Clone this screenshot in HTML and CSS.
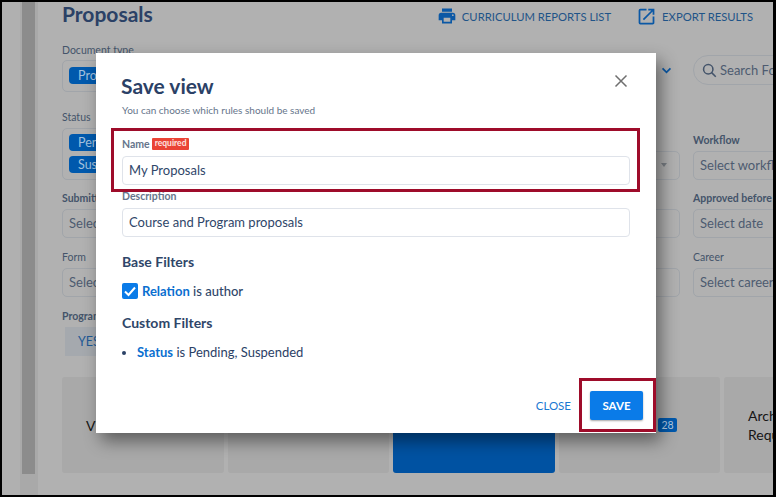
FILE: index.html
```html
<!DOCTYPE html>
<html lang="en">
<head>
    <meta charset="UTF-8">
    <meta name="viewport" content="width=device-width, initial-scale=1.0">
    <title>Proposals</title>
    <link rel="stylesheet" href="styles.css">
</head>
<body>
    <div class="frame">
        <div class="rail"><div class="rail-track"><div class="rail-strip"></div></div></div>
        <div class="page">
            <div class="page-head">
                <h1>Proposals</h1>
                <div class="head-links">
                    <a class="head-link">
                        <svg viewBox="0 0 24 24" width="20" height="20"><path d="M18,3H6V7H18M19,12A1,1 0 0,1 18,11A1,1 0 0,1 19,10A1,1 0 0,1 20,11A1,1 0 0,1 19,12M16,19H8V14H16M19,8H5A3,3 0 0,0 2,11V17H6V21H18V17H22V11A3,3 0 0,0 19,8Z"/></svg>
                        CURRICULUM REPORTS LIST
                    </a>
                    <a class="head-link">
                        <svg viewBox="0 0 24 24" width="21" height="21"><path d="M19 19H5V5h7V3H5a2 2 0 0 0-2 2v14a2 2 0 0 0 2 2h14c1.1 0 2-.9 2-2v-7h-2v7zM14 3v2h3.59l-9.83 9.83 1.41 1.41L19 6.41V10h2V3h-7z"/></svg>
                        EXPORT RESULTS
                    </a>
                </div>
            </div>

            <div class="filters">
                <div class="filter col-1">
                    <label class="tight">Document type</label>
                    <div class="field tall"><span class="tag">Proposal</span></div>
                </div>
                <div class="chevron-cell">
                    <svg viewBox="0 0 12 8" width="11" height="7"><path d="M1.500 1.500 6 6l4.500-4.500" fill="none" stroke="#0b58a5" stroke-width="2"/></svg>
                </div>
                <div class="search">
                    <svg viewBox="0 0 24 24" width="15" height="15"><circle cx="10" cy="10" r="7.500" fill="none" stroke="#44546a" stroke-width="2.500"/><path d="m15 15 7 7" stroke="#44546a" stroke-width="2.500"/></svg>
                    Search Forms
                </div>

                <div class="filter col-1">
                    <label>Status</label>
                    <div class="field tags">
                        <span class="tag">Pending</span>
                        <span class="tag">Suspended</span>
                    </div>
                </div>
                <div class="filter col-4 push-status">
                    <div class="field"><span class="caret"></span></div>
                </div>
                <div class="filter col-5 push-label">
                    <label class="strong">Workflow</label>
                    <div class="field">Select workflow</div>
                </div>

                <div class="filter col-1">
                    <label class="strong">Submitted after</label>
                    <div class="field">Select date</div>
                </div>
                <div class="filter col-4 push-field">
                    <div class="field"></div>
                </div>
                <div class="filter col-5">
                    <label class="strong">Approved before</label>
                    <div class="field">Select date</div>
                </div>

                <div class="filter col-1">
                    <label>Form</label>
                    <div class="field">Select form</div>
                </div>
                <div class="filter col-4 push-field">
                    <div class="field"></div>
                </div>
                <div class="filter col-5">
                    <label>Career</label>
                    <div class="field">Select career</div>
                </div>

                <div class="filter col-1">
                    <label class="strong">Program</label>
                    <div class="yes-no"><span>YES</span></div>
                </div>
            </div>

            <div class="tiles">
                <div class="tile">View All</div>
                <div class="tile"></div>
                <div class="tile active"></div>
                <div class="tile"><span class="count">28</span></div>
                <div class="tile">Archived<br>Requests</div>
            </div>
        </div>
    </div>

    <div class="modal">
        <button class="modal-close" aria-label="Close">
            <svg viewBox="0 0 14 14" width="14" height="14"><path d="M1.500 1.500l11 11M12.500 1.500l-11 11" stroke="#6f6f6f" stroke-width="1.500" fill="none"/></svg>
        </button>
        <h2>Save view</h2>
        <p class="modal-sub">You can choose which rules should be saved</p>

        <div class="modal-label name-label">Name <span class="required">required</span></div>
        <div class="modal-input">My Proposals</div>
        <div class="modal-label">Description</div>
        <div class="modal-input">Course and Program proposals</div>

        <h3>Base Filters</h3>
        <div class="check-row">
            <span class="checkbox">
                <svg viewBox="0 0 16 16" width="16" height="16"><path d="M3 8.500 6.500 12 13 4.500" fill="none" stroke="#fff" stroke-width="2"/></svg>
            </span>
            <span><b>Relation</b> is author</span>
        </div>
        <h3 class="custom">Custom Filters</h3>
        <ul>
            <li><b>Status</b> is Pending, Suspended</li>
        </ul>

        <div class="modal-foot">
            <a class="close-link">CLOSE</a>
            <button class="save-btn">SAVE</button>
        </div>
    </div>

    <!-- red callouts from the screenshot -->
    <div class="callout callout-name"></div>
    <div class="callout callout-save"></div>
</body>
</html>
```

FILE: styles.css
```css
html, body {
    margin: 0;
    padding: 0;
    height: 100%;
}
body {
    font-family: "Lato", "Liberation Sans", sans-serif;
    background-color: #000;
    overflow: hidden;
    position: relative;
}
.frame {
    display: flex;
    height: 493px;
    width: 771px;
    margin: 2px 0 0 2px;
    background-color: #b0b0b0;
    overflow: hidden;
}
.rail {
    width: 36px;
    flex: none;
    padding-left: 18px;
    box-sizing: border-box;
    background-color: #b0b0b0;
}
.rail-track {
    height: 100%;
    padding-left: 2px;
    background-color: #a9a9a9;
}
.rail-strip {
    width: 13px;
    height: 472px;
    background-color: #8c8c8c;
}
.page {
    flex: 1;
    min-width: 0;
    padding-left: 24px;
    background-color: #b1b1b1;
}
.page-head {
    display: flex;
    justify-content: space-between;
    height: 42px;
}
h1 {
    margin: 0;
    font-size: 21px;
    line-height: 24px;
    font-weight: 700;
    color: #2b4166;
}
.head-links {
    display: flex;
    gap: 25px;
    padding: 3px 20px 0 0;
    height: 22px;
}
.head-link {
    display: flex;
    align-items: center;
    gap: 5px;
    font-size: 11.250px;
    color: #1f5488;
    white-space: nowrap;
}
.head-link svg {
    fill: #0b58a5;
}

.filters {
    display: grid;
    grid-template-columns: repeat(5, 144.750px);
    grid-template-rows: 67px 81px 59px 59px 50px;
    column-gap: 13px;
}
.col-1 { grid-column: 1; }
.col-4 { grid-column: 4; }
.col-5 { grid-column: 5; }
.filter {
    display: flex;
    flex-direction: column;
    min-width: 0;
}
.push-status { padding-top: 40px; }
.push-label { padding-top: 23px; }
.push-field { padding-top: 17px; }
label {
    font-size: 10.500px;
    line-height: 12px;
    height: 12px;
    color: #44546a;
    margin-bottom: 5px;
    white-space: nowrap;
}
label.tight {
    margin-bottom: 4px;
}
label.strong {
    font-weight: 700;
}
.field {
    position: relative;
    height: 29px;
    box-sizing: border-box;
    border: 1px solid #a1a5aa;
    border-radius: 5px;
    padding: 0 6px;
    font-size: 13px;
    line-height: 27px;
    color: #4d5b70;
    white-space: nowrap;
    overflow: hidden;
}
.field.tall {
    height: 32px;
    padding: 6px 6px;
}
.field.tags {
    height: 52px;
    padding: 5px 6px;
    display: flex;
    flex-direction: column;
    align-items: flex-start;
    gap: 5px;
}
.tag {
    display: block;
    height: 17px;
    line-height: 17px;
    padding: 0 9px;
    border-radius: 4px;
    background-color: #0059ad;
    color: #a3c1de;
    font-size: 12.500px;
}
.caret {
    position: absolute;
    right: 12px;
    top: 11px;
    border-top: 4px solid #7a7f85;
    border-left: 3px solid transparent;
    border-right: 3px solid transparent;
}
.chevron-cell {
    grid-column: 4;
    display: flex;
    justify-content: flex-end;
    padding: 23px 8px 0 0;
}
.search {
    grid-column: 5;
    display: flex;
    align-items: center;
    gap: 3px;
    height: 30px;
    margin-top: 11px;
    margin-right: -10px;
    box-sizing: border-box;
    border: 1px solid #a1a5aa;
    border-radius: 15px;
    padding-left: 8px;
    font-size: 13px;
    color: #4d5b70;
    white-space: nowrap;
    overflow: hidden;
}
.yes-no {
    width: 60px;
    height: 29px;
    margin-left: 3px;
    padding-left: 13px;
    box-sizing: border-box;
    background-color: #a5a9ae;
    color: #1f5a96;
    font-size: 12.500px;
    line-height: 29px;
}

.tiles {
    display: flex;
    gap: 4px;
    margin-top: 17px;
}
.tile {
    flex: none;
    position: relative;
    display: flex;
    align-items: center;
    width: 161.500px;
    height: 96px;
    padding-left: 24px;
    box-sizing: border-box;
    border-radius: 3px;
    background-color: #a9a9a9;
    color: #161616;
    font-size: 14px;
    line-height: 19px;
}
.tile.active {
    background-color: #0052a2;
}
.count {
    position: absolute;
    right: 43px;
    top: 41px;
    width: 19px;
    height: 14px;
    border-radius: 2px;
    background-color: #0059ad;
    color: #b5cde6;
    font-size: 10.500px;
    line-height: 14px;
    text-align: center;
}

/* dialog sits over the dimmed page */
.modal {
    position: absolute;
    left: 96px;
    top: 53px;
    width: 560px;
    height: 380px;
    padding: 20px 26px 0 26px;
    box-sizing: border-box;
    background-color: #fff;
    box-shadow: 5px 8px 16px rgba(0, 0, 0, 0.45);
    color: #2b4166;
}
.modal-close {
    position: absolute;
    right: 28px;
    top: 21px;
    padding: 0;
    border: none;
    background: none;
    line-height: 0;
}
h2 {
    margin: 0 0 0 -1px;
    font-size: 21px;
    line-height: 26px;
    font-weight: 700;
    color: #2b4166;
}
.modal-sub {
    margin: 5px 0 0;
    font-size: 10px;
    line-height: 13px;
    color: #66758b;
}
.modal-label {
    font-size: 10.500px;
    line-height: 13px;
    font-weight: 700;
    color: #66758b;
}
.name-label {
    display: flex;
    align-items: center;
    gap: 2px;
    margin-top: 21px;
    margin-bottom: 5px;
}
.required {
    display: inline-block;
    height: 12px;
    line-height: 11px;
    padding: 0 3px;
    border-radius: 1px;
    background-color: #ea4335;
    color: #fde3e0;
    font-size: 8.500px;
    font-weight: 700;
    position: relative;
    top: -1px;
}
.modal-input {
    height: 29px;
    box-sizing: border-box;
    border: 1px solid #dfe3ea;
    border-radius: 4px;
    padding: 0 6px;
    font-size: 13px;
    line-height: 27px;
    color: #2f4669;
    margin-bottom: 5px;
}
.modal-input + .modal-label {
    margin-bottom: 5px;
}
h3 {
    margin: 16px 0 0;
    font-size: 14px;
    line-height: 18px;
    font-weight: 700;
    color: #2f4669;
}
h3.custom {
    margin-top: 15px;
}
.check-row {
    display: flex;
    align-items: center;
    gap: 4px;
    margin-top: 12px;
    font-size: 13px;
    font-weight: 500;
    color: #2f4669;
}
.check-row b, li b {
    font-weight: 700;
    color: #0b6fd0;
}
.checkbox {
    width: 16px;
    height: 16px;
    border-radius: 2px;
    background-color: #0a7be8;
}
.checkbox svg {
    display: block;
}
ul {
    margin: 11px 0 0;
    padding: 0 0 0 15px;
    font-size: 13px;
    line-height: 18px;
}
.modal-foot {
    position: absolute;
    right: 13px;
    bottom: 13px;
    display: flex;
    align-items: center;
    gap: 19px;
}
.close-link {
    font-size: 11.500px;
    color: #1a78d2;
}
.save-btn {
    width: 53px;
    height: 29px;
    padding: 0;
    border: none;
    border-radius: 2px;
    background-color: #0a7be8;
    color: #fff;
    font-family: inherit;
    font-size: 11.500px;
    font-weight: 700;
    box-shadow: 0 1px 2px rgba(0, 0, 0, 0.35);
}

.callout {
    position: absolute;
    box-sizing: border-box;
    border: 3px solid #9e0c2a;
}
.callout-name {
    left: 111px;
    top: 128px;
    width: 529px;
    height: 64px;
}
.callout-save {
    left: 579px;
    top: 378px;
    width: 77px;
    height: 54px;
}
```
